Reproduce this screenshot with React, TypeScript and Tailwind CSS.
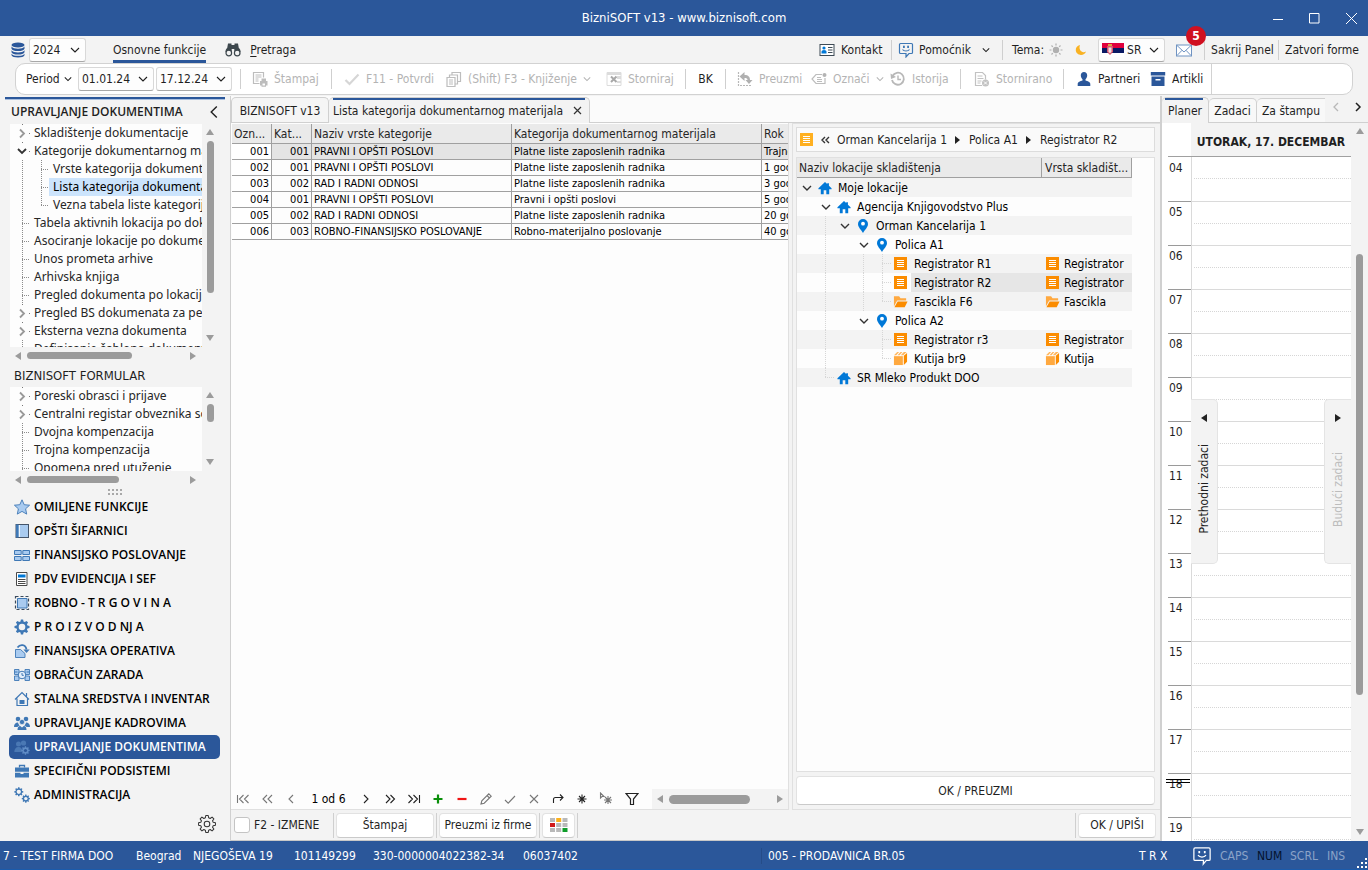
import React, { ReactNode } from "react";

const DIM = "text-[#b4b4b4]";

/* ---------- small drawings ---------- */

function Chev({ dir = "down", className = "", w = 1.3, size = 10 }: { dir?: "down" | "left" | "right"; className?: string; w?: number; size?: number }) {
  const d = dir === "down" ? "M1 3l4 4 4-4" : dir === "left" ? "M7 1L3 5l4 4" : "M3 1l4 4-4 4";
  return (
    <svg width={size} height={size} viewBox="0 0 10 10" fill="none" stroke="currentColor" strokeWidth={w} className={"shrink-0 " + className} aria-hidden="true">
      <path d={d} />
    </svg>
  );
}

function Tri({ dir, className = "text-[#9b9b9b]" }: { dir: "up" | "down" | "left" | "right"; className?: string }) {
  const d = { up: "M0 7L4 1l4 6z", down: "M0 1l4 6 4-6z", left: "M7 0L1 4l6 4z", right: "M1 0l6 4-6 4z" }[dir];
  return (
    <svg width="8" height="8" viewBox="0 0 8 8" fill="currentColor" className={"shrink-0 " + className} aria-hidden="true">
      <path d={d} />
    </svg>
  );
}

function Svg({ children, size = 16, className = "" }: { children: ReactNode; size?: number; className?: string }) {
  return (
    <svg width={size} height={size} viewBox="0 0 16 16" fill="none" className={"shrink-0 " + className} aria-hidden="true">
      {children}
    </svg>
  );
}

const gearPath =
  "M6.9 0.5h2.2l.4 2 1.3.6 1.7-1.2 1.6 1.6-1.2 1.7.6 1.3 2 .4v2.2l-2 .4-.6 1.3 1.2 1.7-1.6 1.6-1.7-1.2-1.3.6-.4 2H6.900l-.4-2-1.300-.6-1.700 1.200-1.600-1.600 1.200-1.700-.6-1.300-2-.4V6.900l2-.4.6-1.300-1.200-1.700 1.600-1.600 1.700 1.200 1.300-.6z";

const I = {
  db: (
    <svg width="14" height="16" viewBox="0 0 14 16" fill="#2b579a" aria-hidden="true">
      <ellipse cx="7" cy="3" rx="6.500" ry="2.600" />
      <path d="M.5 4.500c1 1.700 3.500 2.200 6.500 2.200s5.500-.5 6.500-2.200v2.200c-.6 1.500-3 2.400-6.500 2.400S1.100 8.200.5 6.700zM.5 8.200c1 1.700 3.500 2.200 6.500 2.200s5.500-.5 6.500-2.200v2c-.6 1.500-3 2.300-6.500 2.300s-5.900-.8-6.500-2.300zM.5 11.700c1 1.700 3.500 2.100 6.500 2.100s5.500-.4 6.500-2.100v1.600c-.6 1.500-3 2.200-6.500 2.200s-5.900-.7-6.500-2.200z" />
    </svg>
  ),
  bino: (
    <Svg>
      <path d="M3 1.500h3.500V3h3V1.500H13l.8 4.500c1.300 1 1.800 2 1.700 4H9.300V7H6.700v3H.5C.4 8 1 7 2.200 6z" fill="#3d474d" />
      <circle cx="3.800" cy="11" r="2.800" fill="#f3f3f3" stroke="#3d474d" strokeWidth="1.200" />
      <circle cx="12.200" cy="11" r="2.800" fill="#f3f3f3" stroke="#3d474d" strokeWidth="1.200" />
    </Svg>
  ),
  contact: (
    <Svg>
      <rect x="1" y="2.500" width="14" height="11" fill="#fff" stroke="#3d4a55" />
      <circle cx="5" cy="6" r="1.600" fill="#0078d7" />
      <path d="M2.500 11.500V9.800c0-1 1-1.800 2.500-1.800s2.500.8 2.500 1.800v1.700z" fill="#0078d7" />
      <path d="M9 5.500h4.500M9 8h4.500M9 10.500h4.500" stroke="#3d4a55" />
    </Svg>
  ),
  chat: (c: string) => (
    <Svg>
      <path d="M2.500 1.500h11c.6 0 1 .4 1 1v8c0 .6-.4 1-1 1h-2.500L8 15v-3.500H2.500c-.6 0-1-.4-1-1v-8c0-.6.4-1 1-1z" stroke={c} strokeWidth="1.200" />
      <rect x="5" y="3.700" width="1.800" height="2.300" fill={c} />
      <rect x="9.200" y="3.700" width="1.800" height="2.300" fill={c} />
      <path d="M4.500 7.500c1.500 2 5.500 2 7 0" stroke={c} strokeWidth="1.200" />
    </Svg>
  ),
  sun: (
    <svg width="14" height="14" viewBox="0 0 14 14" fill="none" aria-hidden="true">
      <circle cx="7" cy="7" r="3.200" fill="#b0b0b0" />
      <path d="M7 .5v2M7 11.500v2M.5 7h2M11.500 7h2M2.500 2.500l1.300 1.300M10.200 10.200l1.300 1.300M2.500 11.500l1.300-1.300M10.200 3.800l1.300-1.300" stroke="#b0b0b0" strokeWidth="1.200" />
    </svg>
  ),
  moon: (
    <svg width="12" height="12" viewBox="0 0 12 12" aria-hidden="true">
      <path d="M5 1C2 1.600.6 3.800.8 6.300c.2 2.700 2.500 4.700 5.200 4.700 2.300 0 4.300-1.500 5-3.600-1 .7-2.200 1-3.400.6C5 7.300 3.800 4 5 1z" fill="#f9b223" />
    </svg>
  ),
  mail: (
    <Svg>
      <rect x=".5" y="3" width="15" height="11" fill="#fff" stroke="#6f93c2" />
      <path d="M1 3.500l7 6.500 7-6.500M1 13.500l5-5.200M15 13.500l-5-5.200" stroke="#6f93c2" />
    </Svg>
  ),
  print: (
    <Svg>
      <path d="M7.500 12.500H1.500v-11h10v5" stroke="#bdbdbd" strokeWidth="1.200" />
      <path d="M3.500 4h6M3.500 6h6M3.500 8h3M3.500 10h3" stroke="#bdbdbd" />
      <path d="M8 10h7.500v4.500H14v1.200H9.500v-1.200H8zM9.500 7.500H14V10H9.500z" fill="#bdbdbd" />
      <rect x="10.500" y="12.500" width="2.500" height="2" fill="#fff" />
    </Svg>
  ),
  check: (
    <Svg>
      <path d="M1.500 9l4 4L14.500 3.500" stroke="#d6d6d6" strokeWidth="2.200" />
    </Svg>
  ),
  copies: (
    <Svg>
      <path d="M1 6.500h8v9H1zM3.500 6V4h8v9H9.500M6 3.500V1.500h8.500v9H12" stroke="#bdbdbd" strokeWidth="1.200" />
      <path d="M3 9h4M3 11h4M3 13h4" stroke="#bdbdbd" />
    </Svg>
  ),
  storn: (
    <Svg>
      <path d="M1 1.500h14v13H1z" stroke="#dcdcdc" />
      <path d="M1 2h14v2H1zM11 5h4v3h-4zM11 10h4v2h-4z" fill="#dcdcdc" />
      <path d="M5 5.500l5.500 5.500M10.500 5.500L5 11" stroke="#a8a8a8" strokeWidth="2" />
    </Svg>
  ),
  preuzmi: (
    <Svg>
      <path d="M1.500 1v13.500H15" stroke="#b8b8b8" strokeWidth="1.200" strokeDasharray="2 1" />
      <path d="M2.500 5.500l5-4.500v3c4 0 5.500 2 5.500 5h2.500L12 13 8.500 9h2c0-1.500-1-2-3-2v3z" fill="#b0b0b0" />
    </Svg>
  ),
  tag: (
    <Svg>
      <path d="M11 3.500H5L1 8l4 4.500h9V7" stroke="#bdbdbd" strokeWidth="1.200" />
      <path d="M6 6.500h4M6 8.500h5M6 10.500h5" stroke="#bdbdbd" />
      <circle cx="13.500" cy="4" r="2" fill="#b4b4b4" />
    </Svg>
  ),
  history: (
    <Svg>
      <path d="M2.500 5a6 6 0 1 1-.5 4" stroke="#b8b8b8" strokeWidth="1.800" />
      <path d="M.5 2.500L6 6 1 8z" fill="#b8b8b8" />
      <path d="M8 4.500V8.500h3" stroke="#b8b8b8" strokeWidth="1.400" />
    </Svg>
  ),
  stornirano: (
    <Svg>
      <path d="M8 14.500H1.500v-13h7l3 3v4" stroke="#c2c2c2" strokeWidth="1.200" />
      <path d="M3.500 5h5M3.500 7.500h6M3.500 10h4M3.500 12h3" stroke="#c2c2c2" />
      <circle cx="11.500" cy="12" r="3.500" fill="#c2c2c2" />
      <path d="M10 10.500l3 3M13 10.500l-3 3" stroke="#fff" />
    </Svg>
  ),
  person: (
    <Svg>
      <path d="M8 1c2 0 3.200 1.300 3.200 3.300 0 1.600-.7 3-1.700 3.900v1.300c2 .5 4.800 1.400 4.800 3.500V15H1.700v-2c0-2.100 2.800-3 4.800-3.500V8.200c-1-.9-1.700-2.300-1.700-3.900C4.800 2.300 6 1 8 1z" fill="#2b579a" />
    </Svg>
  ),
  archive: (
    <Svg>
      <path d="M.8 1h14.400v3.500H.8zM1.500 5.500h13V15h-13z" fill="#2b579a" />
      <rect x="5.500" y="8" width="5" height="1.500" fill="#fff" />
    </Svg>
  ),
  home: (
    <Svg size={14}>
      <path d="M8 1L.5 8.300v1.200h2.700V15h3.300v-4.500h3V15h3.300V9.500h2.700V8.300L12.500 5.500V2.500h-2v1z" fill="#0078d7" />
    </Svg>
  ),
  pin: (
    <Svg>
      <path d="M8 1a5 5 0 0 1 5 5c0 3.200-3 5.500-5 9-2-3.500-5-5.800-5-9a5 5 0 0 1 5-5z" fill="#0078d7" />
      <circle cx="8" cy="5.700" r="1.900" fill="#fff" />
    </Svg>
  ),
  reg: (c: string) => (
    <svg width="13" height="13" viewBox="0 0 13 13" aria-hidden="true" className="shrink-0">
      <rect width="13" height="13" fill={c} />
      <path d="M3 3.500h7M3 5.500h7M3 7.500h7M3 9.500h7" stroke="#fff" />
    </svg>
  ),
  folder: (
    <Svg size={15}>
      <path d="M1 13V2.500h5.500l1.500 2h6V7H4.500z" fill="#ffa940" />
      <path d="M1.500 14L5 8h10.500l-3 6z" fill="#fb8c00" />
    </Svg>
  ),
  box: (
    <Svg size={15}>
      <path d="M1 5.500h9.500V15H1z" fill="#ffa940" />
      <path d="M11.500 5l3.500-3v9.500L11.500 15z" fill="#fb8c00" />
      <path d="M1 4.500L4.500 1h2L3.500 4.500zM4.800 4.500L8 1h2L7 4.500zM8.300 4.500L11.500 1h3L11 4.500z" fill="#ffb75e" />
    </Svg>
  ),
};

const B = "#3f78b5";
const L = "#a9cbf0";

const menuIcons: ReactNode[] = [
  <Svg key="i"><path d="M8 .8l2.200 4.900 5.400.5-4 3.600 1.100 5.300L8 12.400l-4.700 2.700 1.100-5.300-4-3.600 5.400-.5z" fill={L} stroke={B} strokeWidth=".9" /></Svg>,
  <Svg key="i"><rect x="2" y="1.500" width="12.500" height="13" fill={L} stroke="#44546a" /><path d="M2 1.500h2.500v13H2z" fill={B} /><path d="M5.500 2v12" stroke="#fff" strokeWidth=".8" /></Svg>,
  <Svg key="i"><path d="M.5 3.500h6.700v4H.5zM8.800 3.500h6.700v4H8.800zM.5 9.500h6.700v4H.5zM8.800 9.500h6.700v4H8.800z" fill={L} stroke={B} strokeWidth="1" /></Svg>,
  <Svg key="i"><path d="M2.500 1.500h10.500v13H2.500z" fill="#fff" stroke="#4a4a4a" /><path d="M4 3.500h7.500v3H4z" fill="#0078d7" /><path d="M4 8.500h7.500M4 10.500h7.500M4 12.500h7.500" stroke="#4a4a4a" /></Svg>,
  <Svg key="i"><path d="M1.500 1.500h13v13h-13z" stroke="#3a4a5c" strokeWidth="1.200" strokeDasharray="3 2" /><path d="M3.500 3.500h9.500V13H3.500z" fill={L} stroke={B} /></Svg>,
  <Svg key="i"><path d={gearPath} fill={B} /><circle cx="8" cy="8" r="3.300" fill="#f3f3f3" /></Svg>,
  <Svg key="i"><path d="M1.500 6.500h5l4.500 4v4H1.500z" fill={L} stroke={B} strokeWidth=".9" /><path d="M3.500 4.500C6 1 11.500 1 12.500 6.500" stroke={B} strokeWidth="1.800" /><path d="M9.300 6.500h6.400L12.500 10z" fill={B} /></Svg>,
  <Svg key="i"><path d="M.5 2.500h4.500v5H.5zM.5 9h4.500v4.500H.5zM11 2.500h4.500v5H11zM11 9h4.500v4.500H11z" fill={L} stroke={B} strokeWidth=".9" /><circle cx="8" cy="8" r="3.800" fill="#e4effb" stroke={B} /><path d="M8 6v2.300h1.800M.5 5h3M12.500 5h3" stroke={B} /></Svg>,
  <Svg key="i"><path d="M1 8.500L8 1.500l7 7M3 7.500v7h10.500v-7M12.500 5.500V2" stroke={B} strokeWidth="1.200" /><path d="M5.500 9h5v4h-5z" fill={B} /></Svg>,
  <Svg key="i"><circle cx="4" cy="4" r="2.300" fill={B} /><circle cx="12" cy="4" r="2.300" fill={B} /><circle cx="8" cy="7" r="2.600" fill={B} stroke="#f3f3f3" strokeWidth=".6" /><path d="M0 12c0-3 1.500-4.500 4-4.500.6 1.800 1 2.500 1.800 3-1 .3-1.800.8-2.300 1.500zM16 12c0-3-1.500-4.500-4-4.500-.6 1.800-1 2.500-1.800 3 1 .3 1.800.8 2.300 1.500zM3.500 15c0-2.500 1-4 2.700-4L8 12.500 9.800 11c1.700 0 2.700 1.500 2.700 4z" fill={B} /></Svg>,
  <Svg key="i"><circle cx="4.500" cy="5" r="2.500" fill="#4a78b4" /><circle cx="9.500" cy="4" r="2.600" fill="#4a78b4" /><path d="M.3 13c0-3 1.500-5 4.200-5s4 2 4 5z" fill="#4a78b4" /><g transform="translate(7 7) scale(.56)"><path d={gearPath} fill="#5f8cc6" /><circle cx="8" cy="8" r="2.800" fill="#2b579a" /></g></Svg>,
  <Svg key="i"><path d="M1 4.500h14v4.200H1zM1 9.700h5.500v1.300h3V9.700H15v4.800H1z" fill={B} /><path d="M5.500 4.500v-2h5v2" stroke={B} strokeWidth="1.300" /></Svg>,
  <Svg key="i"><g transform="scale(.6)"><path d={gearPath} fill={B} /><circle cx="8" cy="8" r="3.600" fill="#f3f3f3" /></g><g transform="translate(7.500 7.300) scale(.54)"><path d={gearPath} fill={B} /><circle cx="8" cy="8" r="3.200" fill="#f3f3f3" /></g></Svg>,
];

const menu = [
  "OMILJENE FUNKCIJE", "OPŠTI ŠIFARNICI", "FINANSIJSKO POSLOVANJE", "PDV EVIDENCIJA I SEF", "ROBNO - T R G O V I N A",
  "P R O I Z V O D NJ A", "FINANSIJSKA OPERATIVA", "OBRAČUN ZARADA", "STALNA SREDSTVA I INVENTAR", "UPRAVLJANJE KADROVIMA",
  "UPRAVLJANJE DOKUMENTIMA", "SPECIFIČNI PODSISTEMI", "ADMINISTRACIJA",
];

/* ---------- header ---------- */

const combo = "grid h-6 items-center rounded-[3px] border border-[#d8d8d8] border-b-[#a8a8a8] bg-[#fdfdfd] ";

function Combo({ label, value, className }: { label: string; value: string; className: string }) {
  return (
    <span className={combo + className}>
      <select aria-label={label} className="col-start-1 row-start-1 h-full w-full appearance-none bg-transparent pl-[3px] outline-none">
        <option>{value}</option>
      </select>
      <Chev w={1.1} className="pointer-events-none col-start-1 row-start-1 mr-[5px] justify-self-end" />
    </span>
  );
}

function Sep({ className = "" }: { className?: string }) {
  return <span className={"h-5 w-px shrink-0 bg-[#cfcfcf] " + className} />;
}

function Tool({ icon, text, className, chev, disabled = true }: { icon?: ReactNode; text: string; className: string; chev?: boolean; disabled?: boolean }) {
  return (
    <button disabled={disabled} className={"flex h-full shrink-0 items-center gap-[6px] whitespace-nowrap " + (disabled ? DIM + " " : "text-[#1f1f1f] ") + className}>
      {icon}
      <span>{text}</span>
      {chev && <Chev size={8} />}
    </button>
  );
}

function TopRow() {
  return (
    <div className="flex h-[27px] shrink-0 items-center pl-[11px] pr-[9px]">
      <span className="mr-1">{I.db}</span>
      <Combo label="Godina" value="2024" className="w-[57px]" />
      <button className="ml-[27px] flex h-full items-center border-b-[3px] border-[#2b579a] pt-[3px]">Osnovne funkcije</button>
      <button className="ml-[19px] flex h-full items-center gap-[9px]">
        {I.bino}
        <span><span className="underline underline-offset-2">P</span>retraga</span>
      </button>
      <div className="ml-auto flex h-full items-center whitespace-nowrap">
        <button className="flex w-[72px] items-center gap-[6px]">{I.contact}Kontakt</button>
        <Sep className="mr-[6px]" />
        <button className="flex w-[104px] items-center gap-[5px]">{I.chat(B)}Pomoćnik<Chev size={8} className="ml-[6px]" /></button>
        <Sep className="mr-[9px]" />
        <span className="w-[37px]">Tema:</span>
        <button aria-label="Svetla tema" className="mr-3">{I.sun}</button>
        <button aria-label="Tamna tema" className="mr-[11px]">{I.moon}</button>
        <span className={combo + "w-[67px]"}>
          <svg width="22" height="14" viewBox="0 0 22 14" className="pointer-events-none z-10 col-start-1 row-start-1 ml-[3px]" aria-hidden="true">
            <path fill="#e0003c" d="M0 0h22v5H0z" /><path fill="#0a1a64" d="M0 5h22v5H0z" /><path fill="#fff" d="M0 10h22v4H0z" />
            <path d="M5 3h6v6l-3 3-3-3z" fill="#d4576c" /><path d="M6.500 4.500h3v4l-1.500 2-1.500-2z" fill="#f1dfe2" /><path d="M6 1h4v2H6z" fill="#d9a441" />
          </svg>
          <select aria-label="Jezik" className="col-start-1 row-start-1 h-full w-full appearance-none bg-transparent pl-[28px] outline-none"><option>SR</option></select>
          <Chev w={1.1} className="pointer-events-none col-start-1 row-start-1 mr-[5px] justify-self-end" />
        </span>
        <button aria-label="Poruke" className="relative ml-[11px] mr-[12px]">
          {I.mail}
          <span className="absolute -top-[16px] left-[10px] flex size-5 items-center justify-center rounded-full bg-[#d01020] text-[12px] font-bold text-white">5</span>
        </button>
        <Sep className="mr-[6px]" />
        <button className="w-[67px] text-left">Sakrij Panel</button>
        <Sep className="mr-[6px]" />
        <button>Zatvori forme</button>
      </div>
    </div>
  );
}

function ToolBar() {
  return (
    <div className="mx-[15px] flex h-8 shrink-0 items-center rounded-[10px] border border-[#d2d2d2] bg-white pl-[10px]">
      <button className="flex w-[52px] shrink-0 items-center gap-1">Period<Chev size={8} /></button>
      <Combo label="Od datuma" value="01.01.24" className="mr-[2px] w-[76px]" />
      <Combo label="Do datuma" value="17.12.24" className="w-[76px]" />
      <Sep className="ml-2 mr-[11px]" />
      <Tool icon={I.print} text="Štampaj" className="w-[79px]" />
      <Sep className="mr-[12px]" />
      <Tool icon={I.check} text="F11 - Potvrdi" className="w-[102px]" />
      <Tool icon={I.copies} text="(Shift) F3 - Knjiženje" className="w-[160px]" chev />
      <Tool icon={I.storn} text="Storniraj" className="w-[79px]" />
      <Sep />
      <Tool text="BK" className="w-[39px] justify-center" disabled={false} />
      <Sep className="mr-[11px]" />
      <Tool icon={I.preuzmi} text="Preuzmi" className="w-[74px]" />
      <Tool icon={I.tag} text="Označi" className="w-[79px]" chev />
      <Tool icon={I.history} text="Istorija" className="w-[70px]" />
      <Sep className="mr-[13px]" />
      <Tool icon={I.stornirano} text="Stornirano" className="w-[89px]" />
      <Sep className="mr-[12px]" />
      <Tool icon={I.person} text="Partneri" className="w-[74px]" disabled={false} />
      <Tool icon={I.archive} text="Artikli" className="w-[61px]" disabled={false} />
      <span className="w-px self-stretch bg-[#d2d2d2]" />
    </div>
  );
}

/* ---------- left panel ---------- */

type Node = { text: string; kind: "closed" | "open" | "leaf" | "child" | "lastchild"; sel?: boolean };

const docs: Node[] = [
  { text: "Skladištenje dokumentacije", kind: "closed" },
  { text: "Kategorije dokumentarnog materijala", kind: "open" },
  { text: "Vrste kategorija dokumentarnog", kind: "child" },
  { text: "Lista kategorija dokumentarnog", kind: "child", sel: true },
  { text: "Vezna tabela liste kategorija", kind: "lastchild" },
  { text: "Tabela aktivnih lokacija po dokumentu", kind: "leaf" },
  { text: "Asociranje lokacije po dokumentu", kind: "leaf" },
  { text: "Unos prometa arhive", kind: "leaf" },
  { text: "Arhivska knjiga", kind: "leaf" },
  { text: "Pregled dokumenta po lokaciji", kind: "leaf" },
  { text: "Pregled BS dokumenata za period", kind: "closed" },
  { text: "Eksterna vezna dokumenta", kind: "closed" },
  { text: "Definisanje šablona dokumenta", kind: "leaf" },
];

const forms: Node[] = [
  { text: "Poreski obrasci i prijave", kind: "closed" },
  { text: "Centralni registar obveznika socijalnog", kind: "closed" },
  { text: "Dvojna kompenzacija", kind: "leaf" },
  { text: "Trojna kompenzacija", kind: "leaf" },
  { text: "Opomena pred utuženje", kind: "leaf" },
];

function NavTree({ nodes, label }: { nodes: Node[]; label: string }) {
  return (
    <ul aria-label={label} className="h-full overflow-hidden bg-[#fdfdfd] font-['Noto_Sans',sans-serif] text-[#262626]">
      {nodes.map((n) => {
        const child = n.kind === "child" || n.kind === "lastchild";
        const group = n.kind === "closed" || n.kind === "open";
        return (
          <li key={n.text} className="flex h-[18px] items-center">
            <svg width="20" height="18" className="shrink-0" fill="none" aria-hidden="true">
              {group ? (
                <>
                  <path d={n.kind === "open" ? "M8 7l4 4 4-4" : "M10 5.500l4 4-4 4"} stroke={n.kind === "open" ? "#333" : "#999"} strokeWidth="1.800" />
                  <path d="M19 9.500h1M12.500 0v1" stroke="#777" />
                </>
              ) : (
                <path d={child ? "M12.500 0v18" : "M12.500 0v18M12 9.500h9"} stroke="#8c8c8c" strokeDasharray="1 1" />
              )}
            </svg>
            {child && (
              <svg width="19" height="18" className="shrink-0" fill="none" aria-hidden="true">
                <path d={n.kind === "child" ? "M11.500 0v18M11 9.500h8" : "M11.500 0v9M11 9.500h8"} stroke="#8c8c8c" strokeDasharray="1 1" />
              </svg>
            )}
            <a href="#" className={"flex-1 overflow-hidden whitespace-nowrap pl-1 leading-[18px] " + (n.sel ? "bg-[#cce4fc] text-black" : "")}>{n.text}</a>
          </li>
        );
      })}
    </ul>
  );
}

function VBar({ thumb }: { thumb: string }) {
  return (
    <div className="flex w-4 shrink-0 flex-col items-center justify-between pb-[5px] pt-[4px]">
      <Tri dir="up" />
      <div className="flex min-h-0 flex-1 pt-[5px]"><span className={"w-[7px] rounded-full bg-[#9b9b9b] " + thumb} /></div>
      <Tri dir="down" />
    </div>
  );
}

function HBar({ thumb }: { thumb: string }) {
  return (
    <div className="flex h-[17px] shrink-0 items-center pl-[14px] pr-[33px]">
      <Tri dir="left" />
      <span className={"ml-[5px] mr-auto h-[7px] rounded-full bg-[#9b9b9b] " + thumb} />
      <Tri dir="right" />
    </div>
  );
}

function LeftPanel() {
  return (
    <aside className="flex w-[231px] shrink-0 flex-col border-r border-[#d0d0d0]">
      <div className="ml-[5px] mr-[5px] mt-px h-[3px] shrink-0 border-b border-[#a9bfdf] bg-[#2b579a]" />
      <div className="flex h-[24px] shrink-0 items-center justify-between pl-[11px] pr-[9px]">
        <h2 className="font-['Open_Sans',sans-serif] font-semibold">UPRAVLJANJE DOKUMENTIMA</h2>
        <button aria-label="Skupi panel"><Chev dir="left" size={14} w={1} /></button>
      </div>
      <div className="flex min-h-0 flex-1 pl-[10px] pr-[12px]">
        <div className="min-w-0 flex-1"><NavTree nodes={docs} label="Upravljanje dokumentima" /></div>
        <VBar thumb="h-[152px]" />
      </div>
      <HBar thumb="w-[105px]" />
      <h3 className="flex h-[23px] shrink-0 items-center pl-[14px] text-[13px]">BIZNISOFT FORMULAR</h3>
      <div className="flex h-[84px] shrink-0 pl-[10px] pr-[12px]">
        <div className="min-w-0 flex-1"><NavTree nodes={forms} label="Biznisoft formular" /></div>
        <VBar thumb="h-[18px]" />
      </div>
      <HBar thumb="w-[92px]" />
      <svg width="14" height="7" className="mx-auto shrink-0" fill="#a8a8a8" aria-hidden="true">
        {[0, 4, 8, 12].map((x) => <path key={x} d={`M${x} 1h2v2h-2zM${x} 5h2v2h-2z`} />)}
      </svg>
      <nav className="shrink-0 pl-[9px] pr-[10px] font-['Open_Sans',sans-serif] font-semibold text-black">
        {menu.map((m, i) => (
          <a key={m} href="#" className={"flex h-6 items-center gap-1 whitespace-nowrap rounded-[5px] pl-[5px] " + (i === 10 ? "bg-[#2b579a] text-white" : "")}>
            {menuIcons[i]}
            {m}
          </a>
        ))}
      </nav>
      <div className="flex h-[34px] shrink-0 items-center justify-end pr-[14px]">
        <button aria-label="Podešavanja">
          <Svg size={18}><path d={gearPath} stroke="#333" strokeWidth=".9" strokeLinejoin="round" /><circle cx="8" cy="8" r="2.500" stroke="#333" strokeWidth=".9" /></Svg>
        </button>
      </div>
    </aside>
  );
}

/* ---------- centre ---------- */

const rows = [
  ["001", "001", "PRAVNI I OPŠTI POSLOVI", "Platne liste zaposlenih radnika", "Trajno"],
  ["002", "001", "PRAVNI I OPŠTI POSLOVI", "Platne liste zaposlenih radnika", "1 godina"],
  ["003", "002", "RAD I RADNI ODNOSI", "Platne liste zaposlenih radnika", "3 godine"],
  ["004", "001", "PRAVNI I OPŠTI POSLOVI", "Pravni i opšti poslovi", "5 godina"],
  ["005", "002", "RAD I RADNI ODNOSI", "Platne liste zaposlenih radnika", "20 godina"],
  ["006", "003", "ROBNO-FINANSIJSKO POSLOVANJE", "Robno-materijalno poslovanje", "40 godina"],
];

function Grid() {
  return (
    <table className="w-full table-fixed border-separate border-spacing-0">
      <colgroup>
        <col className="w-[40px]" /><col className="w-[40px]" /><col className="w-[200px]" /><col className="w-[250px]" /><col />
      </colgroup>
      <thead>
        <tr className="h-5 bg-[#eaeaea] text-left text-[#262626]">
          {["Ozn...", "Kat...", "Naziv vrste kategorije", "Kategorija dokumentarnog materijala", "Rok"].map((h) => (
            <th key={h} className="overflow-hidden whitespace-nowrap border-b border-r border-[#a0a0a0] p-0 pl-[2px] font-normal last:border-r-0">{h}</th>
          ))}
        </tr>
      </thead>
      <tbody className="text-[11px] leading-[15px] text-black">
        {rows.map((r, i) => (
          <tr key={r[0]} className={i === 0 ? "bg-[#e4e4e4]" : "bg-[#fdfdfd]"}>
            {r.map((c, j) => (
              <td key={j} className={"h-4 overflow-hidden whitespace-nowrap border-b border-r border-[#a0a0a0] px-[2px] py-0 last:border-r-0 last:pr-0 " + (j < 2 ? "text-right " : "") + (j === 0 ? "bg-white" : "")}>{c}</td>
            ))}
          </tr>
        ))}
      </tbody>
    </table>
  );
}

function NavIcon({ label, d, color = "#777", w = 1.1 }: { label: string; d: string; color?: string; w?: number }) {
  return (
    <button aria-label={label} className="flex w-6 shrink-0 justify-center">
      <svg width="14" height="14" viewBox="0 0 14 14" fill="none" stroke={color} strokeWidth={w} aria-hidden="true"><path d={d} /></svg>
    </button>
  );
}

function Navigator() {
  return (
    <div className="flex h-5 shrink-0 items-center">
      <NavIcon label="Prvi" d="M1.500 3v8M7.500 3l-4 4 4 4M12.500 3l-4 4 4 4" />
      <NavIcon label="Prethodna strana" d="M7 3L3 7l4 4M12 3L8 7l4 4" />
      <NavIcon label="Prethodni" d="M9 3L5 7l4 4" />
      <span className="w-[51px] text-center text-black">1 od 6</span>
      <NavIcon label="Sledeći" d="M5 3l4 4-4 4" color="#222" />
      <NavIcon label="Sledeća strana" d="M3 3l4 4-4 4M7.500 3l4 4-4 4" color="#222" />
      <NavIcon label="Poslednji" d="M1.500 3l4 4-4 4M6.500 3l4 4-4 4M12.500 3v8" color="#222" />
      <NavIcon label="Dodaj" d="M7 2.500v9M2.500 7h9" color="#0a8f0a" w={2.200} />
      <NavIcon label="Obriši" d="M2.500 7h9" color="#f01414" w={2.200} />
      <NavIcon label="Izmeni" d="M2 12l.8-3.200 7-7 2.400 2.400-7 7zM8 3.500l2.500 2.500" />
      <NavIcon label="Potvrdi" d="M2 8l3.200 3.200L12 4" />
      <NavIcon label="Odustani" d="M3 3l8 8M11 3l-8 8" />
      <NavIcon label="Osveži" d="M2.500 11V7.500c0-1.200.5-2 2-2h7.500M9 2.500l3 3-3 3" color="#222" />
      <NavIcon label="Obeleži" d="M7 2.500v9M2.500 7h9M4 4l6 6M10 4l-6 6" color="#222" />
      <NavIcon label="Idi na obeleženo" d="M9 4v8M5 8h8M6 5l6 6M12 5l-6 6M1.500 1v5l1.500-1.500h2z" />
      <button aria-label="Filter" className="flex w-[28px] shrink-0 justify-center">
        <svg width="14" height="14" viewBox="0 0 14 14" fill="none" stroke="#222" strokeWidth="1.200" aria-hidden="true"><path d="M1 1.500h12L8.500 7v5.500h-3V7z" /></svg>
      </button>
      <div className="ml-auto flex h-full w-[136px] min-w-0 items-center bg-[#f3f3f3] px-1">
        <Tri dir="left" />
        <span className="ml-[5px] mr-auto h-[9px] w-[81px] rounded-full bg-[#9b9b9b]" />
        <Tri dir="right" />
      </div>
    </div>
  );
}

type Loc = { text: string; level: number; icon: ReactNode; open?: boolean; guides?: string; type?: string; sel?: boolean };
const O = "#fb8c00";
// Guides, one letter per level: "-" nothing, "|" line passes by, "+" branch that goes on, "L" last branch.
const locs: Loc[] = [
  { text: "Moje lokacije", level: 0, icon: I.home, open: true },
  { text: "Agencija Knjigovodstvo Plus", level: 1, icon: I.home, open: true, guides: "-" },
  { text: "Orman Kancelarija 1", level: 2, icon: I.pin, open: true, guides: "-|" },
  { text: "Polica A1", level: 3, icon: I.pin, open: true, guides: "-|-" },
  { text: "Registrator R1", level: 4, icon: I.reg(O), guides: "-|-|+", type: "Registrator" },
  { text: "Registrator R2", level: 4, icon: I.reg(O), guides: "-|-|+", type: "Registrator", sel: true },
  { text: "Fascikla F6", level: 4, icon: I.folder, guides: "-|-|L", type: "Fascikla" },
  { text: "Polica A2", level: 3, icon: I.pin, open: true, guides: "-|-" },
  { text: "Registrator r3", level: 4, icon: I.reg(O), guides: "-|--+", type: "Registrator" },
  { text: "Kutija br9", level: 4, icon: I.box, guides: "-|--L", type: "Kutija" },
  { text: "SR Mleko Produkt DOO", level: 1, icon: I.home, guides: "-L" },
];

function Guide({ g }: { g: string }) {
  const d = ({ "-": "", "|": "M9.500 0v19", "+": "M9.500 0v19M9 9.500h10", L: "M9.500 0v9M9 9.500h10" } as Record<string, string>)[g];
  return (
    <svg width="19" height="19" className="shrink-0" fill="none" stroke="#d6d6d6" strokeDasharray="1 1" aria-hidden="true">
      {d && <path d={d} />}
    </svg>
  );
}

function Locations() {
  return (
    <table className="w-[335px] table-fixed border-separate border-spacing-0 text-black">
      <colgroup><col className="w-[245px]" /><col className="w-[90px]" /></colgroup>
      <thead>
        <tr className="h-5 bg-[#eaeaea] text-left text-[#262626]">
          <th className="whitespace-nowrap border-b border-r border-[#a0a0a0] p-0 pl-[2px] font-normal">Naziv lokacije skladištenja</th>
          <th className="whitespace-nowrap border-b border-r border-[#a0a0a0] p-0 pl-[3px] font-normal">Vrsta skladišt...</th>
        </tr>
      </thead>
      <tbody>
        {locs.map((l, i) => (
          <tr key={l.text} className={"h-[19px] " + (i % 2 === 0 ? "bg-[#f3f3f3]" : "bg-[#fdfdfd]")}>
            <td className="p-0">
              <div className="flex h-[19px] items-center">
                {(l.guides ?? "").split("").map((g, k) => <Guide key={k} g={g} />)}
                {l.open && <span className="flex w-[19px] shrink-0 justify-center"><Chev size={10} w={1.400} className="text-[#333]" /></span>}
                <span className="flex w-[17px] shrink-0 justify-center">{l.icon}</span>
                <span className={"flex h-full flex-1 items-center whitespace-nowrap " + (l.sel ? "ml-[2px] bg-[#e6e6e6] pl-[3px]" : "pl-[5px]")}>{l.text}</span>
              </div>
            </td>
            <td className={"p-0 " + (l.sel ? "bg-[#e6e6e6]" : "")}>
              {l.type && <div className="flex h-[19px] items-center pl-[2px]"><span className="flex w-[17px] justify-center">{l.icon}</span><span className="pl-[3px]">{l.type}</span></div>}
            </td>
          </tr>
        ))}
      </tbody>
    </table>
  );
}

const card = "flex items-center justify-center rounded-[4px] border border-[#e2e2e2] border-b-[#cacaca] bg-white whitespace-nowrap";

function Crumb() {
  return <svg width="5" height="8" viewBox="0 0 5 8" className="ml-[8px] mr-[9px]" fill="#222" aria-hidden="true"><path d="M0 0l5 4-5 4z" /></svg>;
}

function Centre() {
  return (
    <main className="flex min-w-0 flex-1 flex-col">
      <div role="tablist" className="flex h-[27px] shrink-0 items-end border-b border-[#d0d0d0] bg-[#fbfbfb]">
        <button role="tab" className="h-[25px] w-[98px] shrink-0 rounded-t-[5px] border border-b-0 border-[#d0d0d0] bg-[#f5f5f5] pt-px">BIZNISOFT v13</button>
        <div className="-mb-px flex h-[26px] w-[261px] items-center justify-between rounded-t-[5px] border border-b-0 border-l-0 border-[#d0d0d0] bg-[#f3f3f3] pl-[4px] pr-[3px]">
          <button role="tab" aria-selected="true" className="relative h-full">
            Lista kategorija dokumentarnog materijala
            <span className="absolute left-0 top-0 h-[2px] w-[252px] bg-[#2b579a]" />
          </button>
          <button aria-label="Zatvori karticu" className="pr-[4px]">
            <svg width="9" height="9" viewBox="0 0 9 9" stroke="#333" strokeWidth="1.200" aria-hidden="true"><path d="M1 1l7 7M8 1L1 8" /></svg>
          </button>
        </div>
      </div>
      <div className="flex min-h-0 flex-1 gap-[3px]">
        <section className="flex min-w-0 flex-1 flex-col border-b border-r border-[#e0e0e0] bg-[#fdfdfd]">
          <div className="min-h-0 flex-1 overflow-hidden pl-px pt-px"><Grid /></div>
          <Navigator />
        </section>
        <section className="flex w-[368px] shrink-0 flex-col border-b border-l border-t border-[#e0e0e0] pb-[4px] pl-[3px] pr-[5px] pt-[3px]">
          <nav className="flex h-[25px] shrink-0 items-center border border-[#dcdcdc] bg-[#fafafa] pl-[3px]">
            {I.reg("#ffb020")}
            <svg width="9" height="8" viewBox="0 0 9 8" fill="none" stroke="#333" strokeWidth="1.400" className="ml-[8px] mr-[7px]" aria-hidden="true"><path d="M4 1L1 4l3 3M8 1L5 4l3 3" /></svg>
            <a href="#">Orman Kancelarija 1</a>
            <Crumb />
            <a href="#">Polica A1</a>
            <Crumb />
            <a href="#">Registrator R2</a>
          </nav>
          <div className="mt-[5px] min-h-0 flex-1 overflow-hidden border border-[#e0e0e0] bg-[#fdfdfd]"><Locations /></div>
          <button className={card + " mt-1 h-[29px] shrink-0"}>OK / PREUZMI</button>
        </section>
      </div>
      <div className="flex h-[31px] shrink-0 items-center gap-[2px] border-b border-[#c8c8c8] pl-[3px] pr-1">
        <label className="flex w-[97px] items-center gap-1 whitespace-nowrap">
          <input type="checkbox" className="size-4 shrink-0 appearance-none rounded-[3px] border border-[#c4c4c4] bg-white" />
          F2 - IZMENE
        </label>
        <Sep className="h-[25px]" />
        <button className={card + " h-[25px] w-[98px]"}>Štampaj</button>
        <Sep className="h-[25px]" />
        <button className={card + " h-[25px] w-[98px]"}>Preuzmi iz firme</button>
        <Sep className="h-[25px]" />
        <button aria-label="Raspored" className={card + " h-[25px] w-[33px]"}>
          <svg width="18" height="14" viewBox="0 0 18 14" aria-hidden="true">
            <path fill="#b9b9b9" d="M0 0h5v4H0zM12.500 0h5v4h-5zM6.200 5h5v4h-5zM12.500 5h5v4h-5zM0 10h5v4H0zM6.200 10h5v4h-5z" />
            <path fill="#fcb11c" d="M6.200 0h5v4h-5z" /><path fill="#d11a1a" d="M0 5h5v4H0z" /><path fill="#0f9d2a" d="M12.500 10h5v4h-5z" />
          </svg>
        </button>
        <Sep className="h-[25px]" />
        <Sep className="ml-auto h-[25px]" />
        <button className={card + " h-[25px] w-[78px]"}>OK / UPIŠI</button>
      </div>
    </main>
  );
}

/* ---------- planner ---------- */

const hours = ["04", "05", "06", "07", "08", "09", "10", "11", "12", "13", "14", "15", "16", "17", "18", "19"];

function Planner() {
  return (
    <aside className="flex w-[208px] shrink-0 flex-col border-l-2 border-[#d0d0d0]">
      <div role="tablist" className="flex h-[27px] shrink-0 items-end">
        <button role="tab" aria-selected="true" className="relative h-[26px] w-[47px] shrink-0 rounded-t-[5px] border border-b-0 border-l-0 border-[#d0d0d0]">
          Planer<span className="absolute left-[3px] top-0 h-[2px] w-[38px] bg-[#2b579a]" />
        </button>
        <button role="tab" className="h-[25px] w-[48px] shrink-0 rounded-t-[5px] border border-l-0 border-[#d0d0d0] bg-[#f8f8f8]">Zadaci</button>
        <button role="tab" className="h-[25px] w-[68px] shrink-0 whitespace-nowrap rounded-tl-[5px] border border-l-0 border-r-0 border-[#d0d0d0] bg-[#f8f8f8]">Za štampu</button>
        <span className="flex h-full flex-1 items-center justify-between border-b border-[#d0d0d0] pb-[5px] pl-[6px] pr-[5px]">
          <button aria-label="Prethodna kartica" className="text-[#b8b8b8]"><Chev dir="left" /></button>
          <button aria-label="Sledeća kartica"><Chev dir="right" w={1.500} /></button>
        </span>
      </div>
      <div className="flex min-h-0 flex-1">
        <div className="relative flex min-w-0 flex-1 flex-col overflow-hidden bg-white">
          <div className="flex h-[34px] shrink-0">
            <span className="w-[29px] shrink-0 pl-[6px]"><span className="block h-full border-b border-[#a0a0a0]" /></span>
            <h2 className="flex flex-1 items-center justify-center whitespace-nowrap border-b border-[#a0a0a0] bg-[#f3f3f3] pt-[4px] font-bold">UTORAK, 17. DECEMBAR</h2>
          </div>
          <div className="min-h-0 flex-1 overflow-hidden">
            {hours.map((h, i) => (
              <div key={h} className="flex h-[44px]">
                <div className="relative flex w-[29px] shrink-0 pl-[6px]">
                  <span className={"flex-1 pl-px pt-[2px] " + (i ? "border-t border-[#9a9a9a]" : "pt-[3px]")}>{h}</span>
                  {h === "18" && <span className="absolute left-[4px] top-[6px] h-[4px] w-[24px] border-y border-black" />}
                </div>
                <div className={"flex-1 border-l border-[#dadada] " + (i ? "border-t" : "")}>
                  <div className="ml-[2px] h-[22px] border-b border-dotted border-[#d6d6d6]" />
                </div>
              </div>
            ))}
          </div>
          <button className="absolute left-[29px] top-[276px] flex h-[165px] w-[27px] flex-col items-center rounded-r-[5px] border border-l-0 border-[#e4e4e4] bg-[#f3f3f3] pt-[14px]">
            <Tri dir="left" className="text-[#222]" />
            <span className="mt-[22px] rotate-180 [writing-mode:vertical-rl]">Prethodni zadaci</span>
          </button>
          <button disabled className="absolute right-0 top-[276px] flex h-[165px] w-[27px] flex-col items-center rounded-l-[5px] border border-r-0 border-[#e4e4e4] bg-[#f3f3f3] pt-[14px] text-[#bdbdbd]">
            <Tri dir="right" className="text-[#222]" />
            <span className="mt-[30px] rotate-180 [writing-mode:vertical-rl]">Budući zadaci</span>
          </button>
        </div>
        <div className="flex w-[17px] shrink-0 flex-col items-center pb-[5px] pt-[4px]">
          <Tri dir="up" />
          <div className="flex min-h-0 w-[7px] flex-1 flex-col">
            <span className="flex-[119]" /><span className="flex-[441] rounded-full bg-[#9b9b9b]" /><span className="flex-[133]" />
          </div>
          <Tri dir="down" />
        </div>
      </div>
    </aside>
  );
}

function StatusBar() {
  return (
    <footer className="flex h-[29px] shrink-0 items-center whitespace-nowrap border-b border-[#1b5bab] bg-[#2b579a] pl-[3px] pt-px text-white">
      <span className="w-[133px]">7 - TEST FIRMA DOO</span>
      <span className="w-[57px]">Beograd</span>
      <span className="w-[101px]">NJEGOŠEVA 19</span>
      <span className="w-[79px]">101149299</span>
      <span className="w-[150px]">330-0000004022382-34</span>
      <span className="w-[238px]">06037402</span>
      <span className="border-l border-[#254c88] pl-[6px]">005 - PRODAVNICA BR.05</span>
      <span className="ml-auto w-[53px]">T R X</span>
      <span className="w-[28px]">
        <svg width="20" height="20" viewBox="0 0 16 16" fill="none" stroke="#fff" strokeWidth="1" aria-hidden="true">
          <path d="M2.500 1.500h11c.6 0 1 .4 1 1v8c0 .6-.4 1-1 1h-2L9 14.500l.2-3H2.500c-.6 0-1-.4-1-1v-8c0-.6.4-1 1-1z" /><path d="M5.800 4v1.800M10.200 4v1.800" strokeWidth="1.400" /><path d="M4.800 7.300c1.300 2 5.100 2 6.400 0" />
        </svg>
      </span>
      <span className="w-[37px] text-[#8ba3c8]">CAPS</span>
      <span className="w-[33px] text-[#04122c]">NUM</span>
      <span className="w-[37px] text-[#8ba3c8]">SCRL</span>
      <span className="w-[30px] text-[#8ba3c8]">INS</span>
      <svg width="11" height="11" viewBox="0 0 11 11" className="self-end" fill="#fff" aria-hidden="true">
        <path d="M8 0h2v2H8zM4 4h2v2H4zM8 4h2v2H8zM0 8h2v2H0zM4 8h2v2H4zM8 8h2v2H8z" />
      </svg>
    </footer>
  );
}

export default function App() {
  return (
    <div className="flex h-screen min-h-[760px] w-full flex-col overflow-hidden bg-[#f3f3f3] font-['DejaVu_Sans_Condensed',sans-serif] text-[12px] leading-4 text-[#1f1f1f]">
      <header className="grid h-9 shrink-0 grid-cols-[1fr_auto_1fr] items-center bg-[#2b579a] text-white">
        <span />
        <h1 className="text-[13px]">BizniSOFT v13 - www.biznisoft.com</h1>
        <div className="flex items-center justify-end gap-[26px] pr-[11px]">
          <button aria-label="Umanji"><svg width="10" height="11" stroke="#fff" aria-hidden="true"><path d="M0 6.500h10" /></svg></button>
          <button aria-label="Uvećaj"><svg width="11" height="11" fill="none" stroke="#fff" aria-hidden="true"><path d="M.5.5h9.500v9.500H.5z" /></svg></button>
          <button aria-label="Zatvori"><svg width="11" height="11" stroke="#fff" aria-hidden="true"><path d="M0 0l11 11M11 0L0 11" /></svg></button>
        </div>
      </header>
      <TopRow />
      <ToolBar />
      <div className="mt-px flex min-h-0 flex-1">
        <LeftPanel />
        <Centre />
        <Planner />
      </div>
      <StatusBar />
    </div>
  );
}
